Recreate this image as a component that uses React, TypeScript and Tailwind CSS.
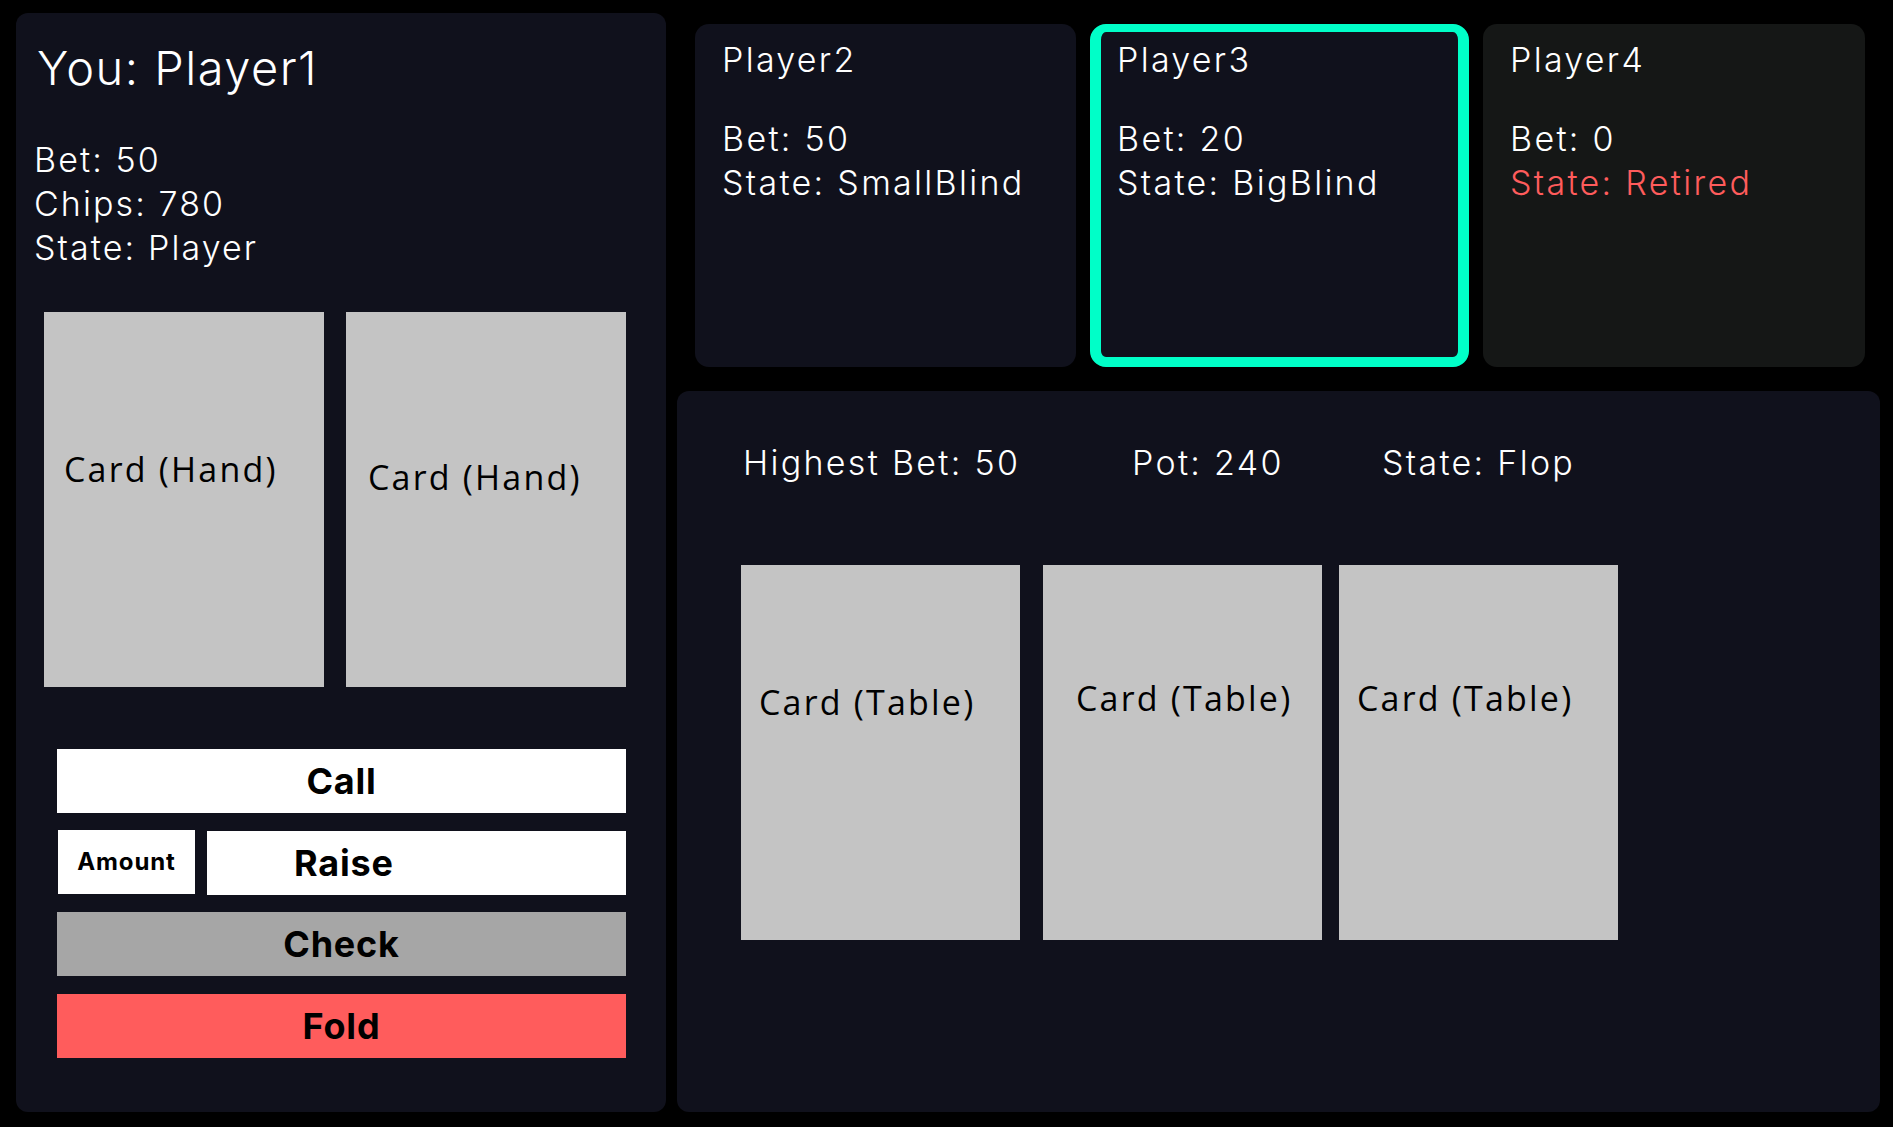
import React from "react";

const sans = { fontFamily: "Inter, 'Noto Sans', sans-serif" };

function PlayerCard({
  name,
  bet,
  state,
  variant,
}: {
  name: string;
  bet: number;
  state: string;
  variant: "normal" | "active" | "retired";
}) {
  const base =
    variant === "active"
      ? "w-[379px] rounded-[16px] border-x-[11px] border-t-[8px] border-b-[10px] border-[#00ffc8] bg-[#10111c] pl-[16px] pt-[6px]"
      : variant === "retired"
      ? "w-[382px] rounded-[14px] bg-[#151716] pl-[27px] pt-[14px]"
      : "w-[381px] rounded-[14px] bg-[#10111c] pl-[27px] pt-[14px]";
  return (
    <div className={`${base} h-full flex flex-col text-white font-light text-[34px] leading-[44px] tracking-[2.3px]`}>
      <div>{name}</div>
      <div className="mt-[35px]">Bet: {bet}</div>
      <div className={variant === "retired" ? "text-[#ff5c5c]" : ""}>State: {state}</div>
    </div>
  );
}

function Card({ label, className }: { label: string; className: string }) {
  return (
    <div
      className={`bg-[#c4c4c4] text-black text-[34px] leading-[46px] tracking-[2.2px] ${className}`}
      style={{ fontFamily: "'Open Sans', 'Noto Sans', sans-serif" }}
    >
      {label}
    </div>
  );
}

export default function App() {
  return (
    <div className="w-[1893px] h-[1127px] bg-black flex pl-[16px] pt-[13px] gap-[11px] overflow-hidden" style={sans}>
      {/* Left panel */}
      <div className="w-[650px] h-[1099px] rounded-[12px] bg-[#10111c] flex flex-col">
        <div className="mt-[27px] ml-[21px] text-white font-light text-[47px] leading-[56px] tracking-[1.5px]">You: Player1</div>
        <div className="mt-[42px] ml-[18px] text-white font-light text-[34px] leading-[44px] tracking-[2.1px]">
          <div>Bet: 50</div>
          <div>Chips: 780</div>
          <div>State: Player</div>
        </div>
        <div className="mt-[42px] ml-[28px] flex gap-[22px]">
          <Card label="Card (Hand)" className="w-[280px] h-[375px] pl-[20px] pt-[134px]" />
          <Card label="Card (Hand)" className="w-[280px] h-[375px] pl-[22px] pt-[142px]" />
        </div>
        <div className="mt-[62px] ml-[41px] w-[569px] flex flex-col font-bold text-black tracking-[0.8px]">
          <button className="h-[64px] bg-white text-[36px] leading-none flex items-center justify-center">Call</button>
          <div className="mt-[17px] flex gap-[12px] items-start">
            <div className="w-[137px] h-[64px] ml-[1px] bg-white text-[24px] tracking-[0.9px] flex items-center justify-center">Amount</div>
            <button className="mt-[1px] w-[419px] h-[64px] bg-white text-[36px] leading-none flex items-center pl-[87px]">Raise</button>
          </div>
          <button className="mt-[17px] h-[64px] bg-[#a6a6a6] text-[36px] leading-none flex items-center justify-center">Check</button>
          <button className="mt-[18px] h-[64px] bg-[#ff5c5c] text-[36px] leading-none flex items-center justify-center">Fold</button>
        </div>
      </div>

      {/* Right column */}
      <div className="w-[1203px] flex flex-col">
        <div className="h-[354px] pt-[11px] pl-[18px] flex gap-[14px]">
          <PlayerCard name="Player2" bet={50} state="SmallBlind" variant="normal" />
          <PlayerCard name="Player3" bet={20} state="BigBlind" variant="active" />
          <PlayerCard name="Player4" bet={0} state="Retired" variant="retired" />
        </div>
        <div className="mt-[24px] h-[721px] rounded-[12px] bg-[#10111c] flex flex-col">
          <div className="mt-[50px] ml-[66px] flex text-white font-light text-[34px] leading-[44px] tracking-[2.3px]">
            <div className="w-[389px]">Highest Bet: 50</div>
            <div className="w-[250px]">Pot: 240</div>
            <div>State: Flop</div>
          </div>
          <div className="mt-[80px] ml-[64px] flex">
            <Card label="Card (Table)" className="w-[279px] h-[375px] pl-[18px] pt-[114px]" />
            <Card label="Card (Table)" className="ml-[23px] w-[279px] h-[375px] pl-[33px] pt-[110px]" />
            <Card label="Card (Table)" className="ml-[17px] w-[279px] h-[375px] pl-[18px] pt-[110px]" />
          </div>
        </div>
      </div>
    </div>
  );
}
